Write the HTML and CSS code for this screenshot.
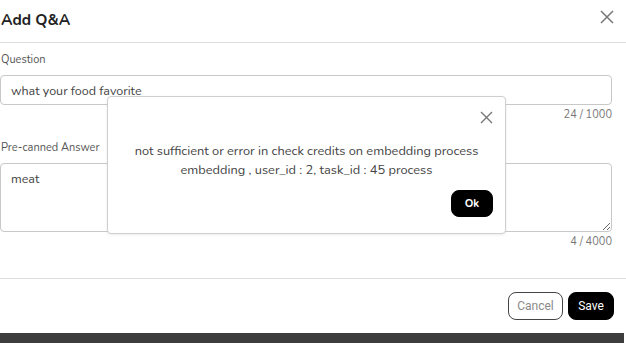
FILE: index.html
```html
<!DOCTYPE html>
<html lang="en">
<head>
    <meta charset="UTF-8">
    <meta name="viewport" content="width=device-width, initial-scale=1.0">
    <title>Add Q&amp;A</title>
    <link rel="stylesheet" href="styles.css">
</head>
<body>
    <div class="modal">
        <div class="modal-header">
            <h1>Add Q&amp;A</h1>
            <button class="close" aria-label="Close">
                <svg width="14" height="14" viewBox="0 0 14 14"><path d="M1 1L13 13M13 1L1 13" stroke="#777" stroke-width="1.5" fill="none"/></svg>
            </button>
        </div>

        <div class="modal-body">
            <div class="field">
                <label>Question</label>
                <input class="input" type="text" value="what your food favorite">
                <div class="count">24 / 1000</div>
            </div>
            <div class="field">
                <label>Pre-canned Answer</label>
                <textarea class="input textarea">meat</textarea>
                <div class="count">4 / 4000</div>
            </div>
        </div>

        <div class="modal-footer">
            <button class="btn btn-outline">Cancel</button>
            <button class="btn btn-dark">Save</button>
        </div>
    </div>

    <div class="bottom-bar"></div>

    <!-- error alert over the form -->
    <div class="alert">
        <button class="close alert-close" aria-label="Close">
            <svg width="13" height="13" viewBox="0 0 13 13"><path d="M1 1L12 12M12 1L1 12" stroke="#777" stroke-width="1.4" fill="none"/></svg>
        </button>
        <p class="alert-text">not sufficient or error in check credits on embedding process<br>embedding , user_id : 2, task_id : 45 process</p>
        <div class="alert-actions">
            <button class="btn btn-dark btn-ok">Ok</button>
        </div>
    </div>
</body>
</html>
```

FILE: styles.css
```css
body {
    margin: 0;
    background: #fff;
    font-family: "Nunito", "Open Sans", sans-serif;
    color: #333;
    width: 626px;
    height: 343px;
    overflow: hidden;
    position: relative;
}
.modal {
    height: 333px;
    display: flex;
    flex-direction: column;
}
.modal-header {
    display: flex;
    align-items: center;
    justify-content: space-between;
    height: 42px;
    padding: 0 12px 0 1px;
    border-bottom: 1px solid #dedede;
}
.modal-header h1 {
    margin: 0;
    font-size: 15.5px;
    font-weight: 700;
    color: #222;
    position: relative;
    top: -2px;
}
.close {
    background: none;
    border: none;
    padding: 0;
    cursor: pointer;
    display: flex;
}
.modal-header .close {
    position: relative;
    top: -4px;
}
.modal-body {
    padding: 9px 14px 0 0;
    flex: 1;
}
.field {
    display: flex;
    flex-direction: column;
}
.field label {
    font-size: 11px;
    color: #555;
    margin: 0 0 8px 1px;
    line-height: 15px;
}
.input {
    border: 1px solid #c8c8c8;
    border-radius: 4px;
    font-family: inherit;
    font-size: 12.5px;
    color: #444;
    padding: 0 10px;
    height: 30px;
    box-sizing: border-box;
    outline: none;
}
.textarea {
    height: 69px;
    padding: 6px 10px;
    resize: vertical;
}
.count {
    text-align: right;
    font-size: 11px;
    color: #777;
    margin-top: 2px;
    line-height: 15px;
    margin-bottom: 18px;
}
.modal-footer {
    display: flex;
    justify-content: flex-end;
    gap: 5px;
    padding: 13px 12px 13px 0;
    border-top: 1px solid #dedede;
}
.btn {
    font-family: "Liberation Sans Narrow", "Roboto", sans-serif;
    font-size: 12px;
    border-radius: 8px;
    height: 28px;
    cursor: pointer;
}
.btn-outline {
    background: #fff;
    border: 1px solid #444;
    color: #8a8a8a;
    padding: 0 8px;
    width: 55px;
}
.btn-dark {
    background: #000;
    border: 1px solid #000;
    color: #fff;
    font-weight: 400;
    width: 46px;
}
.bottom-bar {
    height: 10px;
    background: #3d3d3d;
    margin-right: 2px;
}
.alert {
    position: absolute;
    left: 107px;
    top: 96px;
    width: 397px;
    height: 136px;
    background: #fff;
    border: 1px solid #cfcfcf;
    border-radius: 4px;
    box-shadow: 0 1px 3px rgba(0,0,0,0.08);
    display: flex;
    flex-direction: column;
}
.alert-close {
    align-self: flex-end;
    margin: 14px 12px 0 0;
}
.alert-text {
    margin: 18px 0 0;
    text-align: center;
    font-size: 12.8px;
    line-height: 19px;
    color: #444;
}
.alert-actions {
    display: flex;
    justify-content: flex-end;
    padding: 10px 12px 0 0;
}
.btn-ok {
    width: 42px;
    height: 27px;
    font-family: "Nunito", "Open Sans", sans-serif;
    font-size: 11px;
    font-weight: 700;
}
```
